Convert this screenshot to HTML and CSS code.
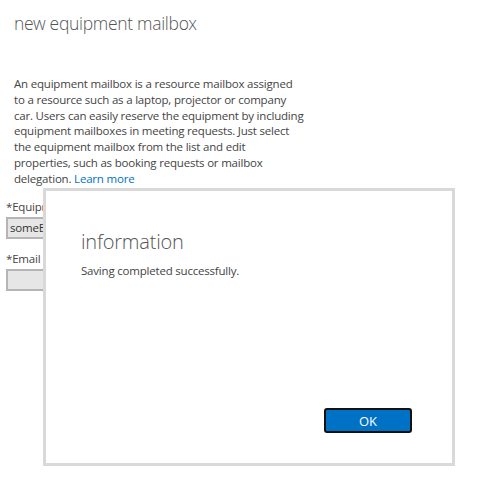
FILE: index.html
```html
<!DOCTYPE html>
<html>
<head>
<meta charset="utf-8">
<link rel="stylesheet" href="styles.css">
</head>
<body>
<div class="page">
  <h1 class="title">new equipment mailbox</h1>
  <p class="desc">An equipment mailbox is a resource mailbox assigned to a resource such as a laptop, projector or company car. Users can easily reserve the equipment by including equipment mailboxes in meeting requests. Just select the equipment mailbox from the list and edit properties, such as booking requests or mailbox delegation. <a class="link" href="#">Learn more</a></p>
  <div class="field">
    <label class="label">*Equipment name:</label>
    <div class="input">someEquipment</div>
  </div>
  <div class="field">
    <label class="label">*Email address:</label>
    <div class="input"></div>
  </div>
</div>
<div class="dialog">
  <h2 class="dlg-title">information</h2>
  <p class="dlg-msg">Saving completed successfully.</p>
  <div class="dlg-actions">
    <button class="ok">OK</button>
  </div>
</div>
</body>
</html>
```
FILE: styles.css
```css
html, body {
  margin: 0;
  background: #fff;
}
body {
  font-family: "Segoe UI", "Open Sans", "Noto Sans", sans-serif;
  color: #444;
  font-size: 11.5px;
  letter-spacing: -0.2px;
}
.page {
  padding: 10px 6px 0 6px;
}
.title {
  font-family: "Open Sans Light", "Open Sans", sans-serif;
  font-weight: 300;
  font-size: 17.5px;
  letter-spacing: -0.3px;
  margin: 0 0 0 8px;
  color: #555;
  line-height: 26px;
}
.desc {
  margin: 40px 0 0 8px;
  width: 290px;
  line-height: 15.8px;
}
.link {
  color: #0072c6;
  text-decoration: none;
}
.field {
  margin-top: 12px;
}
.label {
  display: block;
  line-height: 16px;
  margin-bottom: 2px;
}
.input {
  width: 300px;
  height: 18px;
  border: 2px solid #b5b5b5;
  background: #e6e6e6;
  padding: 0 2px;
  line-height: 18px;
  color: #333;
}
.dialog {
  position: absolute;
  left: 43px;
  top: 188px;
  width: 412px;
  height: 278px;
  box-sizing: border-box;
  border: 3px solid #d9d9d9;
  background: #fff;
  display: flex;
  flex-direction: column;
  padding: 38px 40px 30px 35px;
}
.dlg-title {
  margin: 0;
  font-family: "Open Sans Light", "Open Sans", sans-serif;
  font-weight: 300;
  font-size: 20px;
  letter-spacing: -0.2px;
  line-height: 26px;
  color: #555;
}
.dlg-msg {
  margin: 8px 0 0 0;
  line-height: 16px;
}
.dlg-actions {
  margin-top: auto;
  display: flex;
  justify-content: flex-end;
}
.ok {
  width: 88px;
  height: 25px;
  box-sizing: border-box;
  border: 2px solid #111;
  border-radius: 3px;
  background: #0072c6;
  color: #fff;
  font-family: inherit;
  font-size: 13px;
  letter-spacing: 0;
  padding: 0;
}
```
